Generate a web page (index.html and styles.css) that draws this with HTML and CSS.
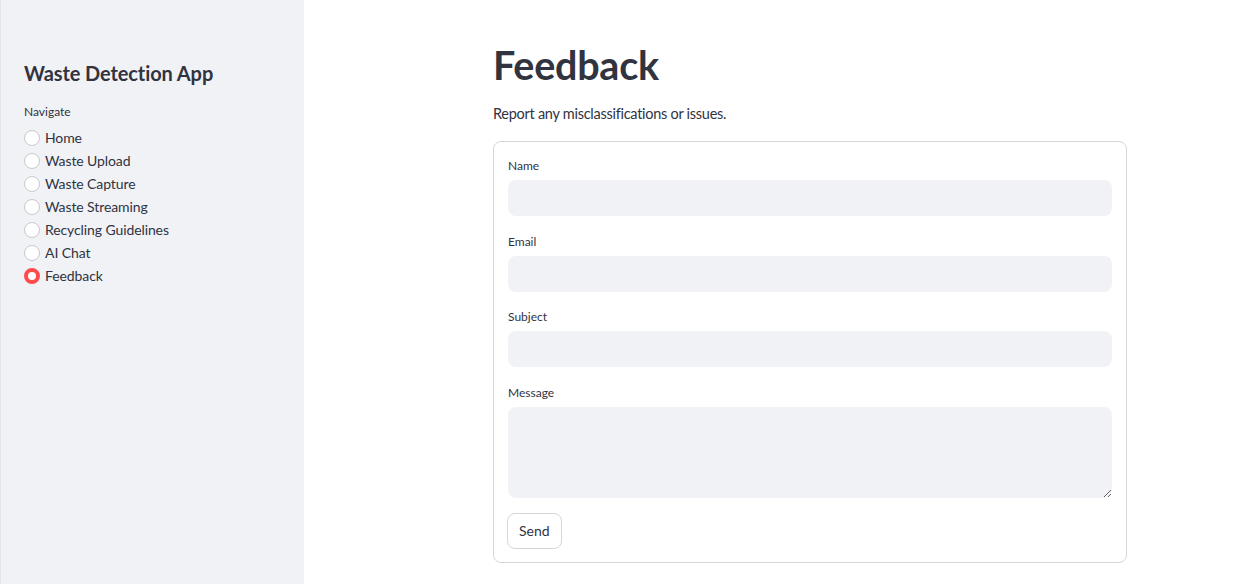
FILE: index.html
```html
<!DOCTYPE html>
<html>
<head>
<meta charset="utf-8">
<link rel="stylesheet" href="styles.css">
</head>
<body>
<div class="app">
  <aside class="sidebar">
    <h2 class="side-title">Waste Detection App</h2>
    <div class="nav-label">Navigate</div>
    <ul class="radios">
      <li class="radio"><span class="dot"></span>Home</li>
      <li class="radio"><span class="dot"></span>Waste Upload</li>
      <li class="radio"><span class="dot"></span>Waste Capture</li>
      <li class="radio"><span class="dot"></span>Waste Streaming</li>
      <li class="radio"><span class="dot"></span>Recycling Guidelines</li>
      <li class="radio"><span class="dot"></span>AI Chat</li>
      <li class="radio selected"><span class="dot"></span>Feedback</li>
    </ul>
  </aside>
  <main class="main">
    <div class="block">
      <h1 class="title">Feedback</h1>
      <p class="intro">Report any misclassifications or issues.</p>
      <form class="form">
        <label class="field"><span class="lbl">Name</span><input class="input" type="text"></label>
        <label class="field"><span class="lbl">Email</span><input class="input" type="text"></label>
        <label class="field"><span class="lbl">Subject</span><input class="input" type="text"></label>
        <label class="field"><span class="lbl">Message</span><textarea class="input area"></textarea></label>
        <div class="actions"><button type="button" class="btn">Send</button></div>
      </form>
    </div>
  </main>
</div>
</body>
</html>
```
FILE: styles.css
```css
* { box-sizing: border-box; }
html, body { margin: 0; padding: 0; }
body {
  font-family: "Source Sans Pro", Lato, "Noto Sans", sans-serif;
  color: #31333f;
  background: #fff;
  width: 1248px;
  height: 584px;
  overflow: hidden;
}
.app { display: flex; height: 584px; }
.sidebar {
  width: 304px;
  flex: none;
  background: #f0f2f6;
  border-left: 1px solid #e3e5ea;
  padding: 59px 23px 0 23px;
}
.side-title {
  margin: 0 0 17px;
  font-size: 20px;
  font-weight: 700;
  line-height: 28px;
  letter-spacing: -0.1px;
}
.nav-label { font-size: 12px; line-height: 16px; margin-bottom: 6px; }
.radios { list-style: none; margin: 0; padding: 0; }
.radio {
  display: flex;
  align-items: center;
  gap: 5px;
  height: 23px;
  font-size: 14px;
  letter-spacing: -0.1px;
}
.dot {
  width: 16px; height: 16px;
  border-radius: 50%;
  background: #fff;
  border: 1px solid #c7c8cc;
  flex: none;
}
.selected .dot {
  background: #fff;
  border: 4.5px solid #ff4b4b;
}
.main { flex: 1; padding-left: 189px; }
.block { width: 634px; padding-top: 40px; }
.title {
  margin: 0;
  font-size: 39.5px;
  font-weight: 700;
  line-height: 50px;
  letter-spacing: -0.25px;
}
.intro { margin: 14px 0 17px; font-size: 14.5px; line-height: 20px; letter-spacing: -0.27px; }
.form {
  border: 1px solid #d6d6d9;
  border-radius: 8px;
  padding: 14px 14px 13px;
  display: flex;
  flex-direction: column;
  gap: 15.6px;
}
.field { display: flex; flex-direction: column; }
.lbl { font-size: 12px; line-height: 20px; margin-bottom: 4px; }
.input {
  display: block;
  width: 100%;
  height: 36px;
  border: none;
  border-radius: 8px;
  background: #f0f2f6;
  font: inherit;
  outline: none;
}
.area { height: 91px; resize: vertical; }
.actions { margin-top: -0.8px; margin-left: -1px; }
.btn {
  font: inherit;
  font-size: 14px;
  color: #31333f;
  background: #fff;
  border: 1px solid #d6d6d9;
  border-radius: 8px;
  height: 36px;
  padding: 0 11px;
}
```
